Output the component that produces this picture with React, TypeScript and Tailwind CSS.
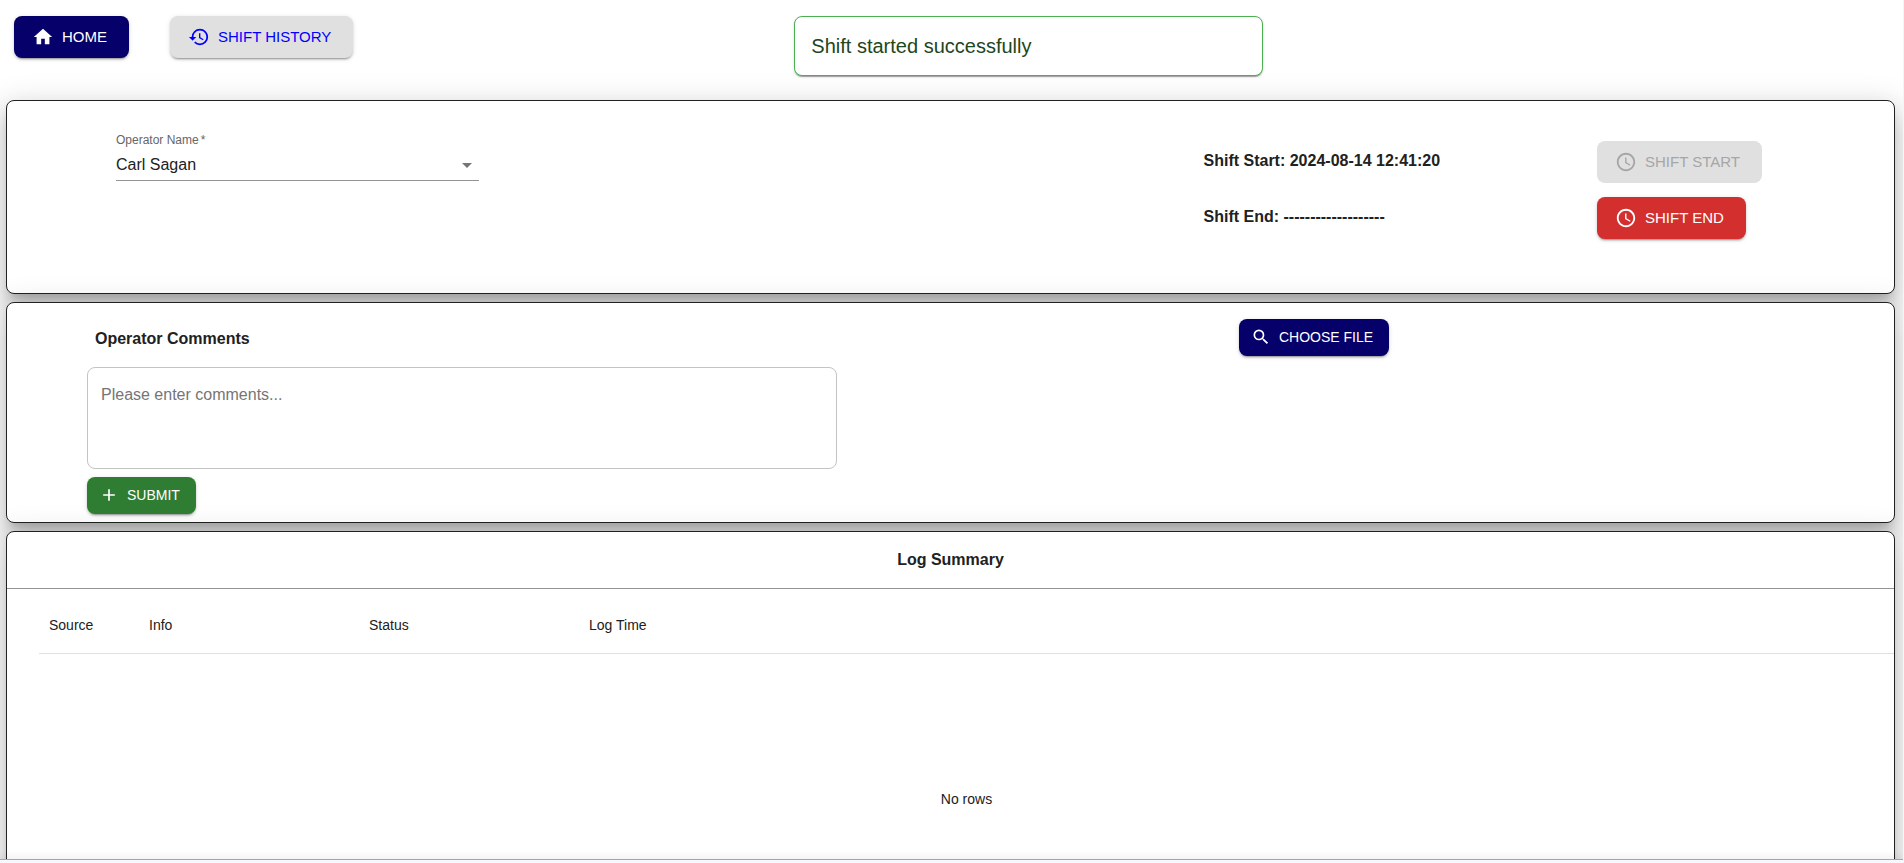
import type { ReactNode } from "react";
import { MdAccessTime, MdAdd, MdArrowDropDown, MdHistory, MdHome, MdSearch } from "react-icons/md";

const buttonShadow =
  "shadow-[0px_3px_1px_-2px_rgba(0,0,0,0.2),0px_2px_2px_0px_rgba(0,0,0,0.14),0px_1px_5px_0px_rgba(0,0,0,0.12)]";
const cardClass =
  "ml-1.5 w-[1889px] rounded-lg border border-[#212121] bg-white shadow-[0px_8px_10px_-5px_rgba(0,0,0,0.2),0px_16px_24px_2px_rgba(0,0,0,0.14),0px_6px_30px_5px_rgba(0,0,0,0.12)]";

function Button({
  icon,
  children,
  className,
  size = "large",
  disabled = false,
}: {
  icon: ReactNode;
  children: ReactNode;
  className: string;
  size?: "large" | "medium";
  disabled?: boolean;
}) {
  const sizing =
    size === "large"
      ? "h-[42.25px] pl-[18px] pr-[22px] text-[15px] leading-[26.25px] [&_svg]:size-[22px]"
      : "h-[36.5px] pl-3 pr-4 text-[14px] leading-[24.5px] [&_svg]:size-5";
  return (
    <button
      disabled={disabled}
      className={`inline-flex shrink-0 items-center gap-2 rounded-lg whitespace-nowrap uppercase ${sizing} ${
        disabled ? "" : buttonShadow
      } ${className}`}
    >
      {icon}
      {children}
    </button>
  );
}

function TopBar() {
  return (
    <header className="flex h-[100px] items-start pt-4 pl-3.5">
      <Button icon={<MdHome />} className="bg-[#06006a] text-white">
        Home
      </Button>
      <Button icon={<MdHistory />} className="ml-[41px] bg-[#e0e0e0] text-[#0000ff]">
        Shift History
      </Button>
      <div className="ml-[441px] flex h-[60px] w-[469px] items-center rounded-lg border border-[#4caf50] bg-white px-4 text-xl text-[#1e4620] shadow-[0px_2px_1px_-1px_rgba(0,0,0,0.2),0px_1px_1px_0px_rgba(0,0,0,0.14),0px_1px_3px_0px_rgba(0,0,0,0.12)]">
        Shift started successfully
      </div>
    </header>
  );
}

function ShiftCard() {
  return (
    <section className={`${cardClass} flex h-[194px] items-start`}>
      <div className="mt-[30px] ml-[109px] w-[363px]">
        <div className="text-xs leading-[18px] text-[#666666]">
          Operator Name<span className="pl-0.5">*</span>
        </div>
        <div className="flex h-8 items-center justify-between border-b border-[#949494] pt-px text-base text-[#212121]">
          Carl Sagan
          <MdArrowDropDown className="size-6 text-[#757575]" />
        </div>
      </div>
      <div className="mt-12 ml-[724.5px] flex w-[393.5px] flex-col gap-8 font-bold text-[#212121]">
        <p>Shift Start: 2024-08-14 12:41:20</p>
        <p>Shift End: -------------------</p>
      </div>
      <div className="mt-10 flex flex-col items-start gap-[13.75px]">
        <Button icon={<MdAccessTime />} disabled className="bg-[#e0e0e0] text-[#a6a6a6]">
          Shift Start
        </Button>
        <Button icon={<MdAccessTime />} className="bg-[#d32f2f] text-white">
          Shift End
        </Button>
      </div>
    </section>
  );
}

function CommentsCard() {
  return (
    <section className={`${cardClass} mt-2 flex h-[221px] items-start`}>
      <div className="ml-20 w-[750px]">
        <h2 className="mt-6 ml-2 font-bold text-[#212121]">Operator Comments</h2>
        <textarea
          placeholder="Please enter comments..."
          className="mt-4 block h-[102px] w-full resize-none rounded-lg border border-[#c4c4c4] bg-transparent px-[13px] pt-[15px] text-base outline-none placeholder:text-[#757575]"
        />
        <Button icon={<MdAdd />} size="medium" className="mt-2 bg-[#2e7d32] text-white">
          Submit
        </Button>
      </div>
      <Button icon={<MdSearch />} size="medium" className="mt-4 ml-[402px] bg-[#06006a] text-white">
        Choose File
      </Button>
    </section>
  );
}

function LogCard() {
  return (
    <section className={`${cardClass} mt-2 h-[400px]`}>
      <h2 className="flex h-[57px] items-center justify-center border-b border-[#949494] pb-px font-bold text-[#212121]">
        Log Summary
      </h2>
      <div className="ml-8">
        <div className="grid h-[65px] grid-cols-[100px_220px_220px_1fr] items-center border-b border-[#e0e0e0] pt-2 text-sm text-[#212121] [&>span]:pl-2.5">
          <span>Source</span>
          <span>Info</span>
          <span>Status</span>
          <span>Log Time</span>
        </div>
        <div className="flex h-[289px] items-center justify-center text-sm text-[#212121]">No rows</div>
      </div>
    </section>
  );
}

export default function App() {
  return (
    <div className="bg-[#f5f5f5] font-['Liberation_Sans',Arial,sans-serif]">
      <div className="relative h-[863px] w-[1903px] overflow-hidden bg-white">
        <TopBar />
        <ShiftCard />
        <CommentsCard />
        <LogCard />
        <footer className="absolute bottom-0 left-0 h-1 w-full border-t border-[#a3a5a8] bg-[#f5f9fd] shadow-[0_0_10px_rgba(0,0,0,0.15)]" />
      </div>
    </div>
  );
}
